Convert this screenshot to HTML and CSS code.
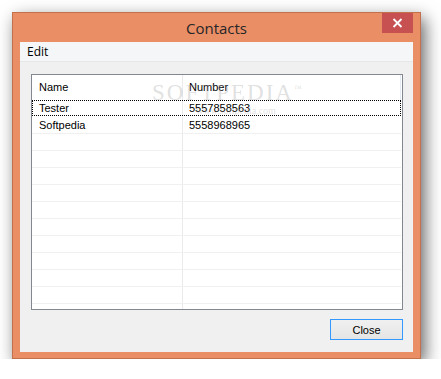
FILE: index.html
```html
<!DOCTYPE html>
<html>
<head>
<meta charset="utf-8">
<link rel="stylesheet" href="styles.css">
</head>
<body>
<div class="window">
  <div class="titlebar">
    <span></span>
    <span class="title">Contacts</span>
    <span class="close-btn"><svg width="11" height="10" viewBox="0 0 11 10"><path d="M1.5 1 L9.5 9 M9.5 1 L1.5 9" stroke="#fff" stroke-width="1.8"/></svg></span>
  </div>
  <div class="client">
    <div class="menubar"><span class="menu-item">Edit</span></div>
    <div class="content">
      <div class="listview">
        <div class="header">
          <div class="hcell c1">Name</div>
          <div class="hcell c2">Number</div>
        </div>
        <div class="rows">
          <div class="row focused"><div class="cell c1">Tester</div><div class="cell c2">5557858563</div></div>
          <div class="row"><div class="cell c1">Softpedia</div><div class="cell c2">5558968965</div></div>
          <div class="row"><div class="cell c1"></div><div class="cell c2"></div></div>
          <div class="row"><div class="cell c1"></div><div class="cell c2"></div></div>
          <div class="row"><div class="cell c1"></div><div class="cell c2"></div></div>
          <div class="row"><div class="cell c1"></div><div class="cell c2"></div></div>
          <div class="row"><div class="cell c1"></div><div class="cell c2"></div></div>
          <div class="row"><div class="cell c1"></div><div class="cell c2"></div></div>
          <div class="row"><div class="cell c1"></div><div class="cell c2"></div></div>
          <div class="row"><div class="cell c1"></div><div class="cell c2"></div></div>
          <div class="row"><div class="cell c1"></div><div class="cell c2"></div></div>
          <div class="row"><div class="cell c1"></div><div class="cell c2"></div></div>
          <div class="row"><div class="cell c1"></div><div class="cell c2"></div></div>
        </div>
        <div class="watermark">
          <div class="wm-big">SOFTPEDIA<sup>™</sup></div>
          <div class="wm-small">www.softpedia.com</div>
        </div>
      </div>
      <div class="buttons">
        <button class="btn">Close</button>
      </div>
    </div>
  </div>
</div>
</body>
</html>
```

FILE: styles.css
```css
html, body {
  margin: 0;
  padding: 0;
  background: #ffffff;
}
body {
  padding: 12px 0 0 12px;
}
.window {
  box-sizing: border-box;
  width: 409px;
  height: 347px;
  background: #ea8e66;
  border: 1px solid #c3704c;
  padding: 0 7px 7px 7px;
  display: flex;
  flex-direction: column;
  box-shadow: 4px 6px 16px rgba(0, 0, 0, 0.6);
}
.titlebar {
  height: 29px;
  display: grid;
  grid-template-columns: 31px 1fr 31px;
  align-items: start;
}
.title {
  font-family: "Open Sans", "Noto Sans", sans-serif;
  font-size: 15px;
  color: #262626;
  text-align: center;
  line-height: 31px;
}
.close-btn {
  height: 20px;
  background: #c75050;
  display: flex;
  align-items: center;
  justify-content: center;
}
.client {
  flex: 1;
  background: #f0f0f0;
  display: flex;
  flex-direction: column;
}
.menubar {
  height: 19px;
  background: #f5f6f7;
  border-bottom: 1px solid #e6e7e8;
  display: flex;
  align-items: center;
  padding-left: 7px;
}
.menu-item {
  font-family: "Open Sans", "Noto Sans", sans-serif;
  font-size: 12px;
  color: #000;
}
.content {
  flex: 1;
  padding: 12px 10px 12px 11px;
  display: flex;
  flex-direction: column;
}
.listview {
  position: relative;
  box-sizing: border-box;
  height: 236px;
  background: #fff;
  border: 1px solid #828790;
  overflow: hidden;
  font-family: "Liberation Sans", Arial, sans-serif;
  font-size: 11px;
  color: #000;
}
.header {
  display: flex;
  height: 25px;
  align-items: stretch;
}
.hcell {
  display: flex;
  align-items: center;
  padding-bottom: 2px;
  box-sizing: border-box;
}
.c1 {
  width: 151px;
  box-sizing: border-box;
  border-right: 1px solid #eaeaea;
  padding-left: 7px;
}
.c2 {
  width: 218px;
  box-sizing: border-box;
  padding-left: 6px;
}
.header .c2 {
  border-right: 1px solid #e3ebf5;
}
.rows {
  display: flex;
  flex-direction: column;
}
.row {
  display: flex;
  height: 17px;
  box-sizing: border-box;
  border-bottom: 1px solid #f0f0f0;
  width: 369px;
}
.cell {
  display: flex;
  align-items: center;
  height: 16px;
}
.row.focused {
  outline: 1px dotted #000;
  outline-offset: -1px;
  height: 16px;
  margin-bottom: 1px;
  border-bottom: none;
}
.watermark {
  position: absolute;
  left: 120px;
  top: 1px;
  color: rgba(150, 150, 150, 0.3);
  pointer-events: none;
}
.wm-big {
  font-family: "Liberation Serif", serif;
  font-size: 23px;
  letter-spacing: 2px;
  line-height: 25px;
}
.wm-big sup {
  font-size: 8px;
}
.wm-small {
  font-family: "Liberation Serif", serif;
  font-size: 10px;
  margin-left: 44px;
}
.buttons {
  display: flex;
  justify-content: flex-end;
  padding-top: 9px;
}
.btn {
  width: 73px;
  height: 21px;
  box-sizing: border-box;
  border: 1px solid #3399ff;
  background: linear-gradient(#f0f0f0, #e5e5e5);
  font-family: "Liberation Sans", Arial, sans-serif;
  font-size: 11px;
  color: #000;
  padding: 0;
  margin: 0;
}
```
